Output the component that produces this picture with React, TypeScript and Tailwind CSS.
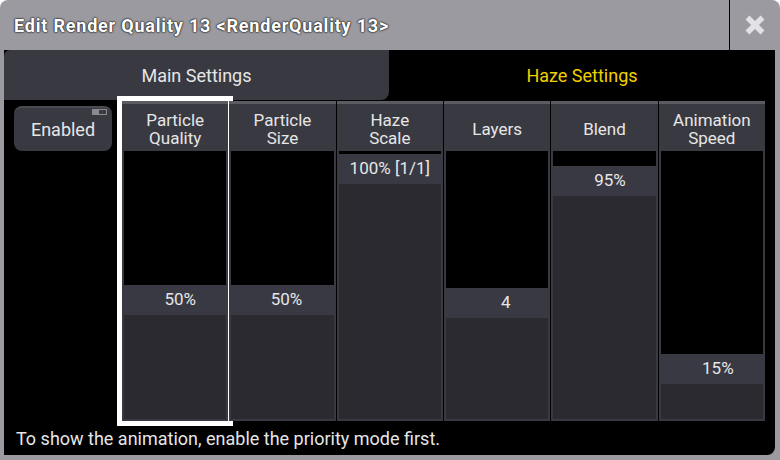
import React from 'react';

type Fader = {
  id: string;
  label: string[];
  value: string;
  offset: number;
  pad: string;
};

const FADERS: Fader[] = [
  { id: 'quality', label: ['Particle', 'Quality'], value: '50%', offset: 134, pad: 'pl-[10px]' },
  { id: 'size', label: ['Particle', 'Size'], value: '50%', offset: 134, pad: 'pl-[8px]' },
  { id: 'scale', label: ['Haze', 'Scale'], value: '100% [1/1]', offset: 3, pad: 'pl-0' },
  { id: 'layers', label: ['Layers'], value: '4', offset: 137, pad: 'pl-[17px]' },
  { id: 'blend', label: ['Blend'], value: '95%', offset: 15, pad: 'pl-[11px]' },
  { id: 'speed', label: ['Animation', 'Speed'], value: '15%', offset: 203, pad: 'pl-[12px]' },
];

const CloseIcon: React.FC = () => (
  <svg width="24" height="24" viewBox="0 0 24 24">
    <path d="M4.5 4.5 L19.5 19.5 M19.5 4.5 L4.5 19.5" stroke="#e2e2e4" strokeWidth="5.5" />
  </svg>
);

const FaderColumn: React.FC<{ fader: Fader; selected?: boolean }> = ({ fader, selected }) => (
  <div
    className={`flex flex-col bg-[#393941] ${selected ? 'outline-[5px] outline-white outline-solid' : ''}`}
  >
    <div className="h-[50px] flex flex-col items-center justify-center border-t-[3px] border-[#5b5b62] text-[17px] leading-[18px] text-[#e6e6e6] pt-[2px]">
      {fader.label.map((line) => (
        <span key={line}>{line}</span>
      ))}
    </div>
    <div className="flex-1 mx-[2px] mb-[2px] bg-black flex flex-col">
      <div style={{ height: fader.offset }} />
      <div
        className={`h-[30px] bg-[#393943] flex items-center justify-center text-[17px] text-[#e6e6e6] whitespace-nowrap ${fader.pad}`}
      >
        {fader.value}
      </div>
      <div className="flex-1 bg-[#2a2a30]" />
    </div>
  </div>
);

const App: React.FC = () => {
  return (
    <div className="w-[780px] h-[460px] bg-[#9a9aa0] rounded-t-[8px] flex flex-col font-['Roboto',sans-serif] overflow-hidden">
      {/* title bar */}
      <div className="h-[50px] flex shrink-0">
        <div className="flex-1 flex items-center pl-[14px] text-[18px] tracking-[0.8px] font-bold text-white [text-shadow:0_0_2px_#2a2a2a,0_0_2px_#2a2a2a,0_0_1px_#000]">
          Edit Render Quality 13 &lt;RenderQuality 13&gt;
        </div>
        <div className="w-[51px] border-l border-black flex items-center justify-center">
          <CloseIcon />
        </div>
      </div>

      <div className="flex-1 ml-[4px] mr-[5px] mb-[5px] bg-black rounded-br-[8px] flex flex-col">
        {/* tabs */}
        <div className="h-[50px] flex shrink-0">
          <div className="w-[385px] bg-[#393941] rounded-tl-[6px] rounded-br-[8px] flex items-center justify-center text-[18px] text-[#e6e6e6]">
            Main Settings
          </div>
          <div className="flex-1 flex items-center justify-center text-[18px] text-[#f2cf00]">
            Haze Settings
          </div>
        </div>

        <div className="flex pt-[1px]">
          <div className="w-[118px] pl-[10px] pt-[5px]">
            <div className="relative w-[98px] h-[45px] bg-[#393941] rounded-[8px] border-t-2 border-[#4a4a52] flex items-center justify-center text-[18px] text-[#e6e6e6]">
              Enabled
              <div className="absolute top-[1px] right-[5px] w-[15px] h-[6px] bg-[#8a8a90] flex justify-end p-px">
                <div className="w-[7px] h-full bg-[#3a3a42]" />
              </div>
            </div>
          </div>
          <div className="w-[643px] h-[320px] grid grid-cols-6 gap-px">
            {FADERS.map((fader, i) => (
              <FaderColumn key={fader.id} fader={fader} selected={i === 0} />
            ))}
          </div>
        </div>

        <div className="flex-1 flex items-center pl-[12px] text-[18px] text-[#e6e6e6]">
          To show the animation, enable the priority mode first.
        </div>
      </div>
    </div>
  );
};

export default App;
